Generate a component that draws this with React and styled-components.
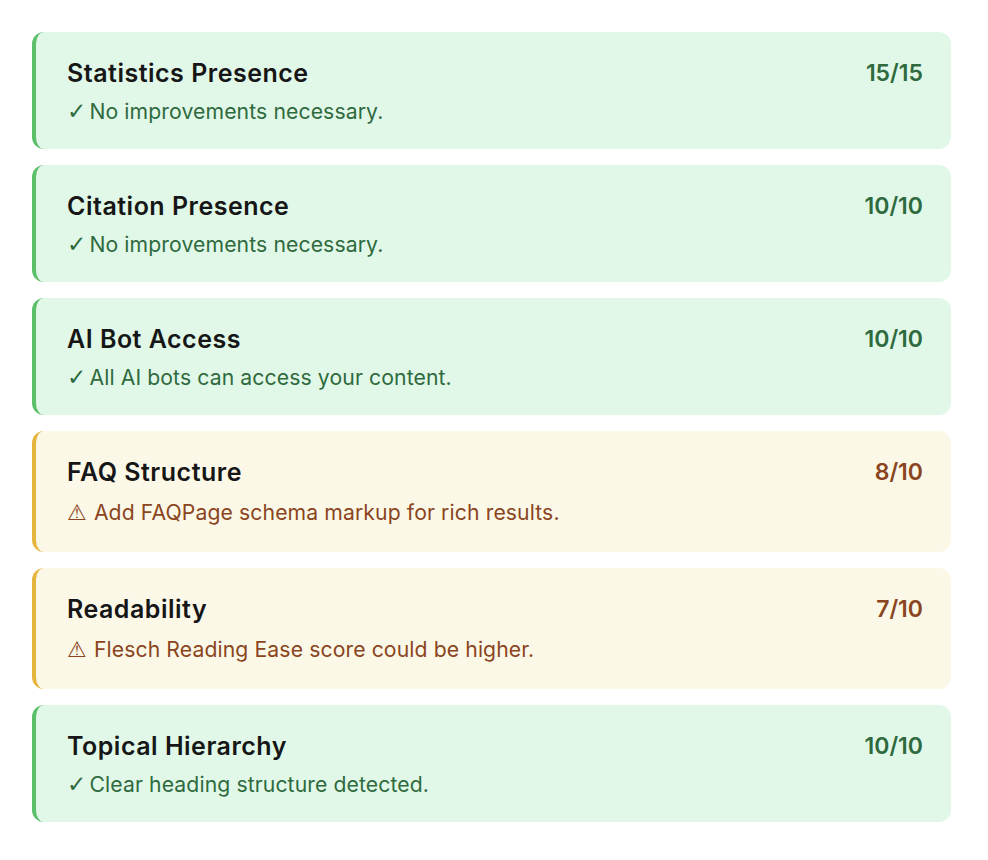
import React from 'react';
import styled, { createGlobalStyle } from 'styled-components';

const GlobalStyle = createGlobalStyle`
  body {
    margin: 0;
    background: #fff;
    font-family: Inter, "Noto Sans", sans-serif;
  }
`;

const THEMES = {
  good: { bg: '#e1f8e8', bar: '#5cbf69', text: '#2f6a3e', score: '#2f6a3e' },
  warn: { bg: '#fcf8e8', bar: '#e5b53f', text: '#8a4520', score: '#8a4520' },
};

const List = styled.div`
  display: flex;
  flex-direction: column;
  gap: 16px;
  padding: 32px 37px 32px 32px;
`;

const Card = styled.div`
  display: flex;
  justify-content: space-between;
  align-items: flex-start;
  padding: 26px 28px 25px 31px;
  background: ${p => THEMES[p.$status].bg};
  border-left: 4px solid ${p => THEMES[p.$status].bar};
  border-radius: 12px;
`;

const Body = styled.div`
  display: flex;
  flex-direction: column;
  gap: 10px;
`;

const Title = styled.div`
  font-size: 25px;
  font-weight: 600;
  color: #161616;
  line-height: 30px;
  letter-spacing: 0.5px;
`;

const Note = styled.div`
  font-size: 21.2px;
  line-height: ${p => (p.$status === 'warn' ? '30px' : '26px')};
  color: ${p => THEMES[p.$status].text};
  letter-spacing: 0.1px;
`;

const Mark = styled.span`
  font-family: "DejaVu Sans", sans-serif;
  font-size: ${p => (p.$status === 'warn' ? '22px' : '23px')};
  line-height: 0;
  margin-right: ${p => (p.$status === 'warn' ? '1px' : '-3px')};
`;

const Score = styled.div`
  font-size: 23px;
  font-weight: 600;
  line-height: 30px;
  color: ${p => THEMES[p.$status].score};
`;

const items = [
  { title: 'Statistics Presence', score: '15/15', status: 'good', note: 'No improvements necessary.' },
  { title: 'Citation Presence', score: '10/10', status: 'good', note: 'No improvements necessary.' },
  { title: 'AI Bot Access', score: '10/10', status: 'good', note: 'All AI bots can access your content.' },
  { title: 'FAQ Structure', score: '8/10', status: 'warn', note: 'Add FAQPage schema markup for rich results.' },
  { title: 'Readability', score: '7/10', status: 'warn', note: 'Flesch Reading Ease score could be higher.' },
  { title: 'Topical Hierarchy', score: '10/10', status: 'good', note: 'Clear heading structure detected.' },
];

export default function App() {
  return (
    <>
      <GlobalStyle />
      <List>
        {items.map(item => (
          <Card key={item.title} $status={item.status}>
            <Body>
              <Title>{item.title}</Title>
              <Note $status={item.status}>
                <Mark $status={item.status}>{item.status === 'good' ? '\u2713' : '\u26A0\uFE0E'}</Mark> {item.note}
              </Note>
            </Body>
            <Score $status={item.status}>{item.score}</Score>
          </Card>
        ))}
      </List>
    </>
  );
}
